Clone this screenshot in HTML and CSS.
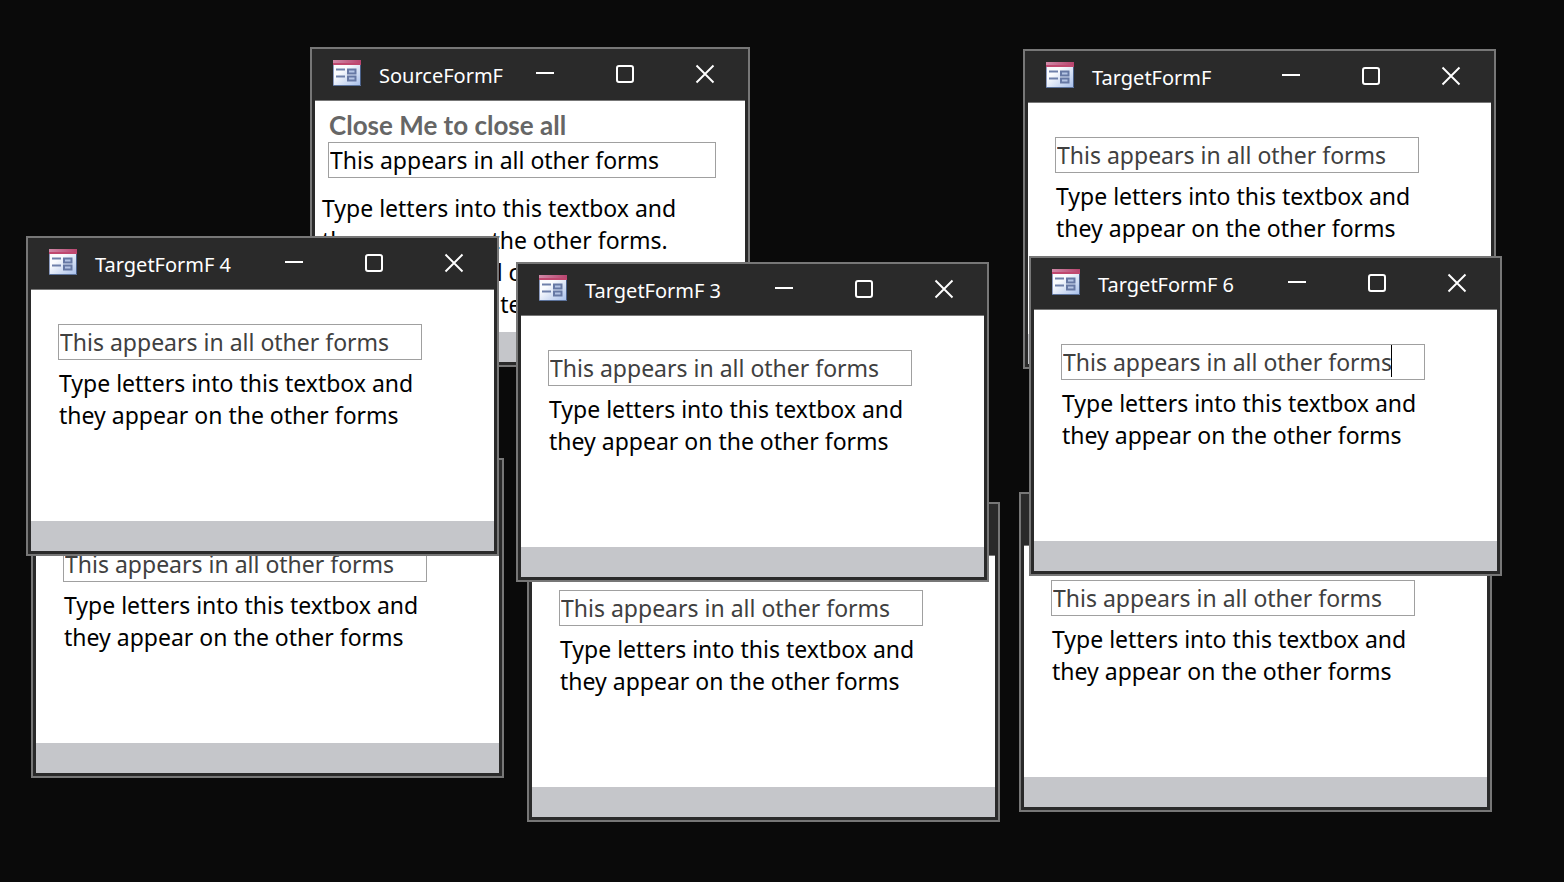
FILE: index.html
```html
<!DOCTYPE html>
<html lang="en">
<head>
    <meta charset="UTF-8">
    <meta name="viewport" content="width=device-width, initial-scale=1.0">
    <title>Forms</title>
    <link rel="stylesheet" href="styles.css">
</head>
<body>
    <!-- shared icons -->
    <svg class="icon-defs" aria-hidden="true">
        <defs>
            <linearGradient id="iconBar" x1="0" y1="0" x2="1" y2="0">
                <stop offset="0" stop-color="#d08aa8"/>
                <stop offset="1" stop-color="#b8446e"/>
            </linearGradient>
            <linearGradient id="iconPage" x1="0" y1="0" x2="1" y2="1">
                <stop offset="0.3" stop-color="#fbfcfe"/>
                <stop offset="1" stop-color="#a9c0ea"/>
            </linearGradient>
        </defs>
        <symbol id="form-icon" viewBox="0 0 28 26">
            <rect x="0" y="0" width="28" height="26" fill="#8d9cc0"/>
            <rect x="1" y="4" width="26" height="21" fill="url(#iconPage)"/>
            <rect x="27" y="5" width="1" height="21" fill="#4a6088"/>
            <rect x="0" y="25" width="28" height="1" fill="#5c739c"/>
            <rect x="0" y="0" width="28" height="5" fill="url(#iconBar)"/>
            <rect x="0" y="3" width="28" height="2" fill="#c0486f"/>
            <path d="M3 9.5h9M3 16.5h9" stroke="#6f80aa" stroke-width="1.8"/>
            <rect x="15" y="9.5" width="7.5" height="4" fill="#b4c4e4" stroke="#6678a4" stroke-width="2"/>
            <rect x="15" y="16.5" width="7.5" height="4" fill="#b4c4e4" stroke="#6678a4" stroke-width="2"/>
        </symbol>
        <symbol id="min-icon" viewBox="0 0 20 20">
            <path d="M1 9h18" stroke="#fff" stroke-width="2"/>
        </symbol>
        <symbol id="max-icon" viewBox="0 0 20 20">
            <rect x="2" y="2" width="16" height="16" rx="2" fill="none" stroke="#fff" stroke-width="2"/>
        </symbol>
        <symbol id="close-icon" viewBox="0 0 20 20">
            <path d="M1.5 1.5l17 17M18.5 1.5l-17 17" stroke="#fff" stroke-width="1.9"/>
        </symbol>
    </svg>

    <main class="desktop">
        <section class="window source">
            <header class="titlebar">
                <svg class="form-icon"><use href="#form-icon"/></svg>
                <h2>SourceFormF</h2>
                <button aria-label="Minimize"><svg><use href="#min-icon"/></svg></button>
                <button aria-label="Maximize"><svg><use href="#max-icon"/></svg></button>
                <button aria-label="Close"><svg><use href="#close-icon"/></svg></button>
            </header>
            <div class="content">
                <h1>Close Me to close all</h1>
                <input type="text" id="source" value="This appears in all other forms">
                <label for="source">Type letters into this textbox and<br>they appear on the other forms.<br>Type to a control copies<br>and open a new text</label>
            </div>
            <footer></footer>
        </section>

        <section class="window target">
            <header class="titlebar">
                <svg class="form-icon"><use href="#form-icon"/></svg>
                <h2>TargetFormF</h2>
                <button aria-label="Minimize"><svg><use href="#min-icon"/></svg></button>
                <button aria-label="Maximize"><svg><use href="#max-icon"/></svg></button>
                <button aria-label="Close"><svg><use href="#close-icon"/></svg></button>
            </header>
            <div class="content">
                <input type="text" id="target" value="This appears in all other forms">
                <label for="target">Type letters into this textbox and<br>they appear on the other forms</label>
            </div>
            <footer></footer>
        </section>

        <section class="window target2">
            <header class="titlebar">
                <svg class="form-icon"><use href="#form-icon"/></svg>
                <h2>TargetFormF 2</h2>
                <button aria-label="Minimize"><svg><use href="#min-icon"/></svg></button>
                <button aria-label="Maximize"><svg><use href="#max-icon"/></svg></button>
                <button aria-label="Close"><svg><use href="#close-icon"/></svg></button>
            </header>
            <div class="content">
                <input type="text" id="target2" value="This appears in all other forms">
                <label for="target2">Type letters into this textbox and<br>they appear on the other forms</label>
            </div>
            <footer></footer>
        </section>

        <section class="window target5">
            <header class="titlebar">
                <svg class="form-icon"><use href="#form-icon"/></svg>
                <h2>TargetFormF 5</h2>
                <button aria-label="Minimize"><svg><use href="#min-icon"/></svg></button>
                <button aria-label="Maximize"><svg><use href="#max-icon"/></svg></button>
                <button aria-label="Close"><svg><use href="#close-icon"/></svg></button>
            </header>
            <div class="content">
                <input type="text" id="target5" value="This appears in all other forms">
                <label for="target5">Type letters into this textbox and<br>they appear on the other forms</label>
            </div>
            <footer></footer>
        </section>

        <section class="window target7">
            <header class="titlebar">
                <svg class="form-icon"><use href="#form-icon"/></svg>
                <h2>TargetFormF 7</h2>
                <button aria-label="Minimize"><svg><use href="#min-icon"/></svg></button>
                <button aria-label="Maximize"><svg><use href="#max-icon"/></svg></button>
                <button aria-label="Close"><svg><use href="#close-icon"/></svg></button>
            </header>
            <div class="content">
                <input type="text" id="target7" value="This appears in all other forms">
                <label for="target7">Type letters into this textbox and<br>they appear on the other forms</label>
            </div>
            <footer></footer>
        </section>

        <section class="window target4">
            <header class="titlebar">
                <svg class="form-icon"><use href="#form-icon"/></svg>
                <h2>TargetFormF 4</h2>
                <button aria-label="Minimize"><svg><use href="#min-icon"/></svg></button>
                <button aria-label="Maximize"><svg><use href="#max-icon"/></svg></button>
                <button aria-label="Close"><svg><use href="#close-icon"/></svg></button>
            </header>
            <div class="content">
                <input type="text" id="target4" value="This appears in all other forms">
                <label for="target4">Type letters into this textbox and<br>they appear on the other forms</label>
            </div>
            <footer></footer>
        </section>

        <section class="window target3">
            <header class="titlebar">
                <svg class="form-icon"><use href="#form-icon"/></svg>
                <h2>TargetFormF 3</h2>
                <button aria-label="Minimize"><svg><use href="#min-icon"/></svg></button>
                <button aria-label="Maximize"><svg><use href="#max-icon"/></svg></button>
                <button aria-label="Close"><svg><use href="#close-icon"/></svg></button>
            </header>
            <div class="content">
                <input type="text" id="target3" value="This appears in all other forms">
                <label for="target3">Type letters into this textbox and<br>they appear on the other forms</label>
            </div>
            <footer></footer>
        </section>

        <section class="window target6">
            <header class="titlebar">
                <svg class="form-icon"><use href="#form-icon"/></svg>
                <h2>TargetFormF 6</h2>
                <button aria-label="Minimize"><svg><use href="#min-icon"/></svg></button>
                <button aria-label="Maximize"><svg><use href="#max-icon"/></svg></button>
                <button aria-label="Close"><svg><use href="#close-icon"/></svg></button>
            </header>
            <div class="content">
                <div class="field">
                    <input type="text" id="target6" value="This appears in all other forms">
                    <span class="caret"></span>
                </div>
                <label for="target6">Type letters into this textbox and<br>they appear on the other forms</label>
            </div>
            <footer></footer>
        </section>
    </main>
</body>
</html>
```
FILE: styles.css
```css
* {
    box-sizing: border-box;
}

body {
    margin: 0;
    background-color: #0a0a0a;
    color: #000;
    font-family: "Noto Sans", sans-serif;
    font-size: 23px;
    line-height: 32px;
}

.icon-defs {
    position: absolute;
    width: 0;
    height: 0;
}

.desktop {
    position: relative;
    min-height: 100vh;
    overflow: hidden;
}

.window {
    position: absolute;
    display: flex;
    flex-direction: column;
    width: 473px;
    padding: 0 3px 3px;
    border: 2px solid #777;
    background-color: #2a2a2a;
}

/* where each window sits on the desktop */
.source { left: 310px; top: 47px; width: 440px; }
.target { left: 1023px; top: 49px; }
.target2 { left: 31px; top: 458px; }
.target3 { left: 516px; top: 262px; }
.target4 { left: 26px; top: 236px; }
.target5 { left: 527px; top: 502px; }
.target6 { left: 1029px; top: 256px; }
.target7 { left: 1019px; top: 492px; }

.titlebar {
    display: flex;
    align-items: center;
    height: 52px;
    padding: 0 0 2px 18px;
    border-bottom: 1px solid #777;
    color: #fff;
}

.titlebar h2 {
    flex: 1;
    margin: 0;
    padding-top: 4px;
    font-size: 20px;
    font-weight: normal;
    white-space: nowrap;
}

.form-icon {
    width: 28px;
    height: 26px;
    margin: 0 18px 2px 0;
}

.titlebar button {
    display: flex;
    align-items: center;
    justify-content: center;
    width: 80px;
    height: 49px;
    padding: 0;
    border: none;
    background: none;
}

.titlebar button svg {
    width: 20px;
    height: 20px;
}

.content {
    display: flex;
    flex-direction: column;
    gap: 7px;
    min-height: 231px;
    padding: 34px 72px 0 27px;
    background-color: #fff;
}

.content label {
    padding-left: 1px;
    white-space: nowrap;
}

.content input {
    width: 100%;
    height: 36px;
    padding: 0 1px;
    border: 1px solid #a0a0a0;
    background-color: #fff;
    color: #404040;
    font: inherit;
    outline: none;
}

.source .content {
    gap: 0;
    padding: 8px 29px 0 13px;
}

.source h1 {
    margin: 0 0 1px;
    padding-left: 1px;
    color: #666;
    font-family: Lato, sans-serif;
    font-size: 26px;
    line-height: 32px;
}

.source input {
    color: #000;
}

.source label {
    margin-left: -7px;
    padding-top: 14px;
}

.field {
    position: relative;
    display: flex;
}

.caret {
    position: absolute;
    left: 330px;
    top: 1px;
    width: 1px;
    height: 32px;
    background-color: #000;
}

footer {
    height: 30px;
    background-color: #c5c6ca;
}
```
